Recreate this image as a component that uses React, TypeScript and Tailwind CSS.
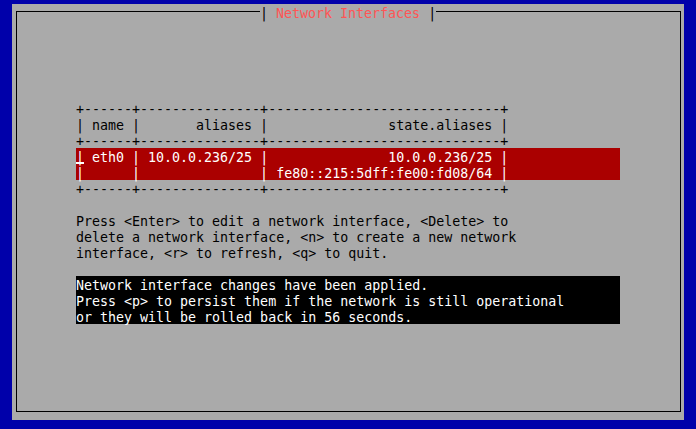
import React from "react";

const mono = { fontFamily: '"DejaVu Sans Mono", "Liberation Mono", monospace' };

const sep = "+------+---------------+-----------------------------+";

// one 8x16 text row; taller line-height pushes glyphs down like the console font
const Line = ({ text, className = "" }: { text: string; className?: string }) => (
    <div className={`h-4 leading-[20px] whitespace-pre ${className}`}>{text}</div>
);

const App = () => {
    return (
        <div className="w-[696px] h-[429px] bg-[#0000aa] pt-[4px] pl-[12px] overflow-hidden" style={mono}>
            {/* panel */}
            <div className="w-[672px] h-[416px] bg-[#aaaaaa] pt-[7px] pl-[4px] text-[13.3px] text-black">
                {/* frame */}
                <div className="relative w-[665px] h-[401px] border border-black">
                    {/* title over the top line */}
                    <div className="absolute top-[-8px] left-[243px] h-4 leading-[20px] whitespace-pre bg-[#aaaaaa] flex">
                        <span className="text-black">| </span>
                        <span className="text-[#ff5555]">Network Interfaces</span>
                        <span className="text-black"> |</span>
                    </div>

                    <div className="pl-[59px] pt-[88px]">
                        {/* table */}
                        <Line text={sep} />
                        <Line text="| name |       aliases |               state.aliases |" />
                        <Line text={sep} />
                        <div className="w-[544px] h-4 leading-[20px] whitespace-pre bg-[#aa0000] text-white flex">
                            <span className="relative inline-block h-4">
                                |
                                <span className="absolute left-0 right-0 bottom-[0px] h-[2px] bg-white" />
                            </span>
                            <span>{" eth0 | 10.0.0.236/25 |               10.0.0.236/25 |"}</span>
                        </div>
                        <Line
                            text="|      |               | fe80::215:5dff:fe00:fd08/64 |"
                            className="w-[544px] bg-[#aa0000] text-white"
                        />
                        <Line text={sep} />

                        <div className="h-4" />

                        {/* help */}
                        <Line text="Press <Enter> to edit a network interface, <Delete> to" />
                        <Line text="delete a network interface, <n> to create a new network" />
                        <Line text="interface, <r> to refresh, <q> to quit." />

                        <div className="h-4" />

                        {/* status box */}
                        <div className="w-[544px] bg-black text-white">
                            <Line text="Network interface changes have been applied." />
                            <Line text="Press <p> to persist them if the network is still operational" />
                            <Line text="or they will be rolled back in 56 seconds." />
                        </div>
                    </div>
                </div>
            </div>
        </div>
    );
};

export default App;
